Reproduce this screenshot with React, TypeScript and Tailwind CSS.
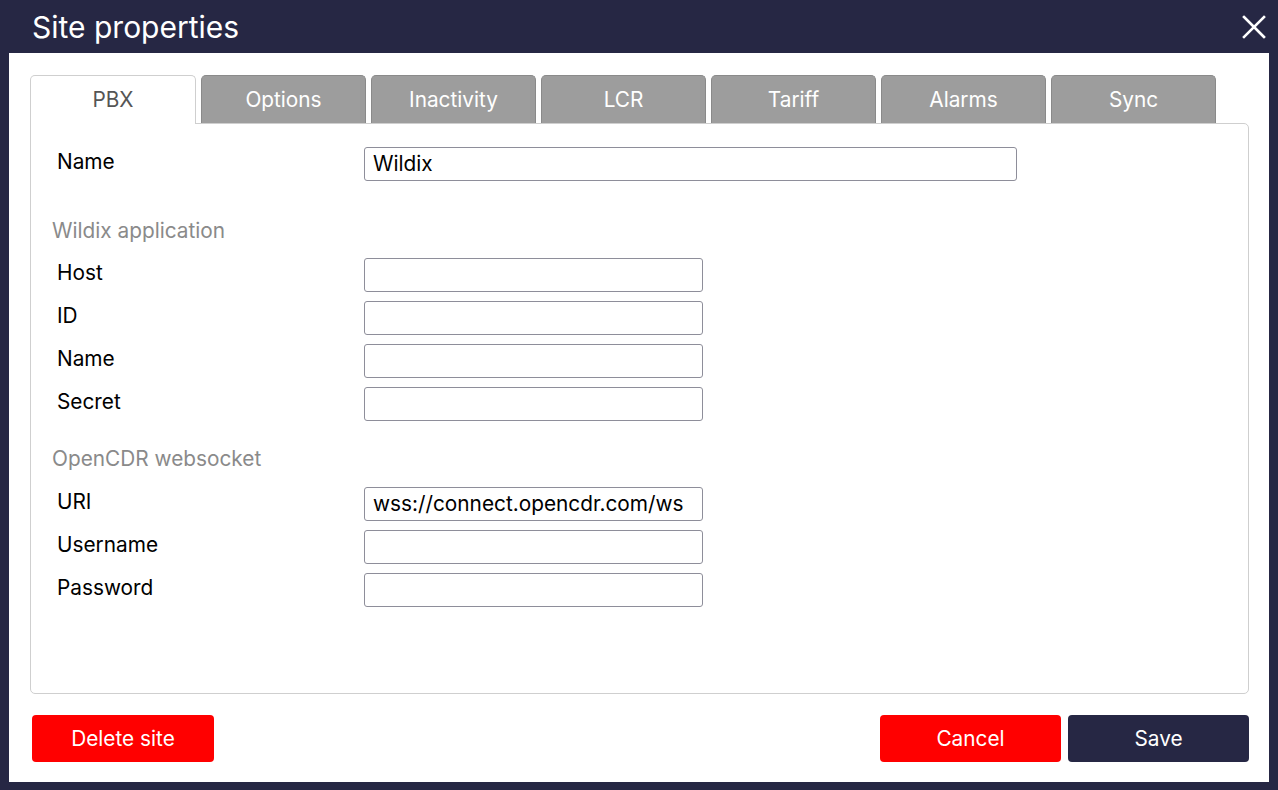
import React from 'react';

const tabs = ['PBX', 'Options', 'Inactivity', 'LCR', 'Tariff', 'Alarms', 'Sync'];

function Field({ label, value, wide }: { label: string; value?: string; wide?: boolean }) {
  return (
    <div className="flex items-center h-[43px]">
      <div className="w-[333px] pl-[26px] -mt-[3px] text-[20.8px] text-black">{label}</div>
      <input
        readOnly
        value={value ?? ''}
        className={`${wide ? 'w-[653px]' : 'w-[339px]'} h-[34px] border border-[#8e8e9a] rounded-[3px] px-[8px] text-[20.8px] text-black outline-none`}
      />
    </div>
  );
}

function Section({ title, first }: { title: string; first?: boolean }) {
  return (
    <div
      className={`pl-[21px] text-[20.8px] text-[#8a8a8a] ${first ? 'mt-[30px] h-[38px]' : 'mt-[18px] h-[39px]'}`}
    >
      {title}
    </div>
  );
}

export default function App() {
  return (
    <div className="w-[1278px] h-[790px] bg-[#262744] flex flex-col font-['Inter',sans-serif] overflow-hidden">
      {/* Title bar */}
      <div className="h-[53px] flex items-center justify-between pl-[32px] pr-[12px] shrink-0">
        <h1 className="text-[30px] text-white leading-none">Site properties</h1>
        <svg width="24" height="24" viewBox="0 0 24 24">
          <path d="M2 2 L22 22 M22 2 L2 22" stroke="white" strokeWidth="2.6" strokeLinecap="square" />
        </svg>
      </div>

      {/* Dialog body */}
      <div className="mx-[9px] mb-[8px] flex-1 bg-white flex flex-col pl-[21px] pr-[20px] pt-[22px]">
        <div className="flex gap-[5px] h-[48px] relative z-10">
          {tabs.map((t, i) =>
            i === 0 ? (
              <div
                key={t}
                className="w-[166px] h-[49px] bg-white border border-[#cfcfcf] border-b-0 rounded-t-[5px] flex items-center justify-center text-[20.8px] text-[#555]"
              >
                {t}
              </div>
            ) : (
              <div
                key={t}
                className="w-[165px] h-[48px] bg-[#9d9d9d] border border-[#8a8a8a] border-b-0 rounded-t-[5px] flex items-center justify-center text-[20.8px] text-white"
              >
                {t}
              </div>
            )
          )}
        </div>

        <div className="h-[571px] border border-[#cfcfcf] rounded-b-[5px] rounded-tr-[5px] pt-[18px]">
          <Field label="Name" value="Wildix" wide />
          <Section title="Wildix application" first />
          <Field label="Host" />
          <Field label="ID" />
          <Field label="Name" />
          <Field label="Secret" />
          <Section title="OpenCDR websocket" />
          <Field label="URI" value="wss://connect.opencdr.com/ws" />
          <Field label="Username" />
          <Field label="Password" />
        </div>

        <div className="flex items-center justify-between mt-[21px]">
          <button className="w-[182px] h-[47px] bg-[#ff0000] rounded-[4px] text-white text-[20.8px] ml-[2px]">Delete site</button>
          <div className="flex gap-[7px]">
            <button className="w-[181px] h-[47px] bg-[#ff0000] rounded-[4px] text-white text-[20.8px]">Cancel</button>
            <button className="w-[181px] h-[47px] bg-[#262744] rounded-[4px] text-white text-[20.8px]">Save</button>
          </div>
        </div>
      </div>
    </div>
  );
}
